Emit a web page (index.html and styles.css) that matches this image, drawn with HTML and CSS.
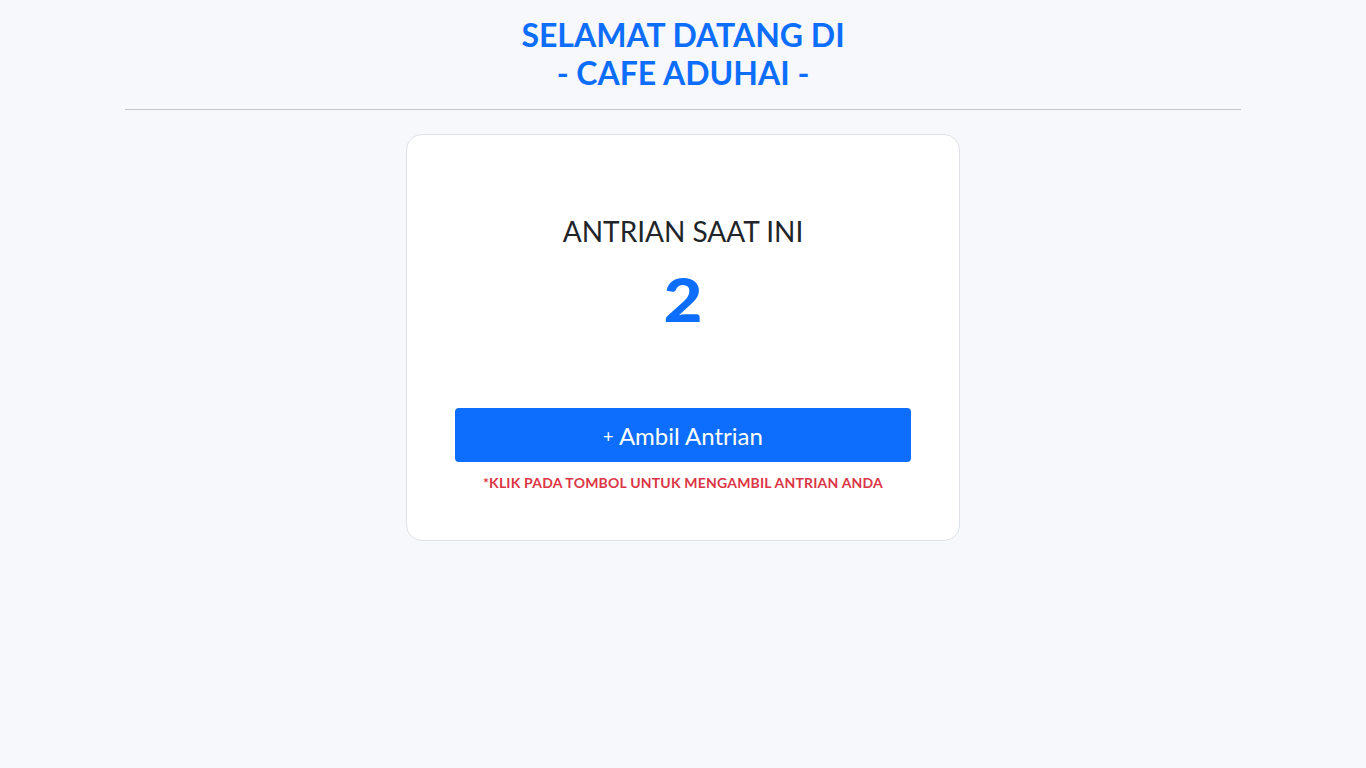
FILE: index.html
```html
<!DOCTYPE html>
<html lang="id">
<head>
<meta charset="utf-8">
<title>Cafe Aduhai - Antrian</title>
<link rel="stylesheet" href="styles.css">
</head>
<body>
<div class="container">
  <header class="header">
    <h2 class="title">SELAMAT DATANG DI<br>- CAFE ADUHAI -</h2>
  </header>
  <hr class="divider">
  <main class="main">
    <section class="card">
      <h3 class="card-label">ANTRIAN SAAT INI</h3>
      <div class="queue-number">2</div>
      <button class="btn-take" type="button"><span class="plus">+</span> Ambil Antrian</button>
      <p class="hint">*KLIK PADA TOMBOL UNTUK MENGAMBIL ANTRIAN ANDA</p>
    </section>
  </main>
</div>
</body>
</html>
```
FILE: styles.css
```css
* { box-sizing: border-box; }
html, body { margin: 0; padding: 0; }
body {
  background: #f7f8fc;
  font-family: "Lato", "Open Sans", sans-serif;
  color: #212529;
}
.container {
  width: 1140px;
  margin: 0 auto;
  padding: 0 12px;
}
.header {
  padding-top: 16px;
  text-align: center;
}
.title {
  margin: 0;
  font-size: 32px;
  line-height: 38px;
  font-weight: 700;
  color: #0d6efd;
}
.divider {
  margin: 17px 0 24px;
  border: 0;
  border-top: 1px solid #c6c7cb;
}
.main {
  display: flex;
  justify-content: center;
}
.card {
  width: 554px;
  background: #fff;
  border: 1px solid #dee2e6;
  border-radius: 16px;
  padding: 79px 48px 49px;
  text-align: center;
}
.card-label {
  margin: 0;
  font-size: 28px;
  line-height: 34px;
  font-weight: 400;
  color: #212529;
}
.queue-number {
  margin-top: 11px;
  font-size: 60px;
  line-height: 80px;
  font-weight: 900;
  color: #0d6efd;
  transform: scaleX(1.12);
}
.btn-take {
  display: block;
  width: 100%;
  margin-top: 69px;
  height: 54px;
  border: 0;
  border-radius: 4px;
  background: #0d6efd;
  color: #fff;
  font-family: inherit;
  font-size: 24px;
  font-weight: 400;
  cursor: pointer;
}
.plus { font-size: 18px; vertical-align: 2px; }
.hint {
  margin: 12px 0 0;
  font-size: 14px;
  font-weight: 700;
  letter-spacing: 0.2px;
  color: #dc3545;
}
```
